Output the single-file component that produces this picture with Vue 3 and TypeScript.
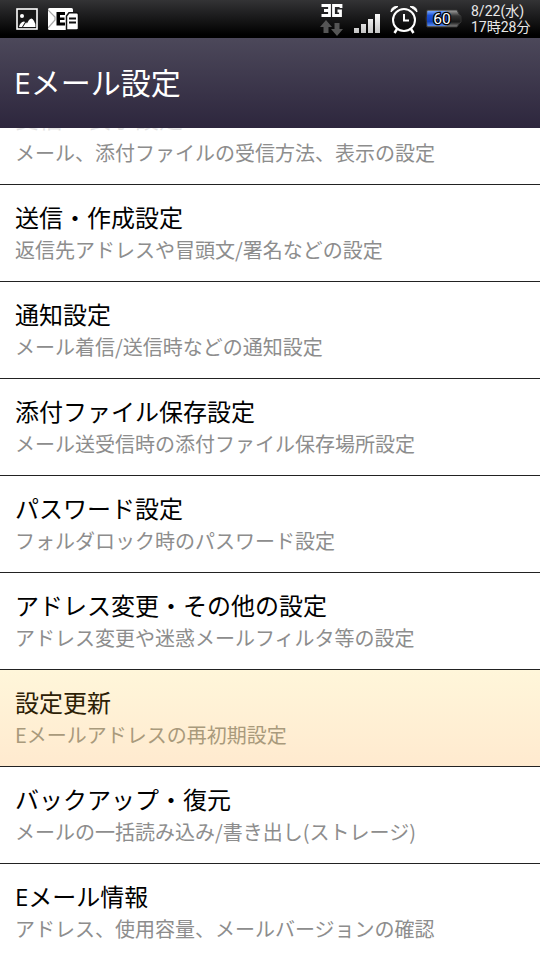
<script setup lang="ts">
interface SettingItem {
  title: string
  summary: string
  pressed?: boolean
}

const items: SettingItem[] = [
  { title: '受信・表示設定', summary: 'メール、添付ファイルの受信方法、表示の設定' },
  { title: '送信・作成設定', summary: '返信先アドレスや冒頭文/署名などの設定' },
  { title: '通知設定', summary: 'メール着信/送信時などの通知設定' },
  { title: '添付ファイル保存設定', summary: 'メール送受信時の添付ファイル保存場所設定' },
  { title: 'パスワード設定', summary: 'フォルダロック時のパスワード設定' },
  { title: 'アドレス変更・その他の設定', summary: 'アドレス変更や迷惑メールフィルタ等の設定' },
  { title: '設定更新', summary: 'Eメールアドレスの再初期設定', pressed: true },
  { title: 'バックアップ・復元', summary: 'メールの一括読み込み/書き出し(ストレージ)' },
  { title: 'Eメール情報', summary: 'アドレス、使用容量、メールバージョンの確認' },
]
</script>

<template>
  <div class="screen">
    <div class="status">
      <div class="notices">
        <svg class="picture" width="22" height="22" viewBox="0 0 22 22">
          <rect x="1" y="1" width="20" height="20" fill="#171717" stroke="#fff" stroke-width="1.600" />
          <circle cx="6" cy="8" r="2" fill="#fff" />
          <path d="M3 19Q4 14 8 13.500L9 14L6 19Z M7 19L10 14.500L11 15L10 17L13 12Q16 8.500 18 13Q19.500 15 19.500 19Z" fill="#fff" />
        </svg>
        <svg class="mail" width="31" height="22" viewBox="0 0 31 22">
          <rect x="0" y="0" width="25" height="22" rx="1.5" fill="#fff" />
          <path d="M0 2L7 9V12L0 20" fill="none" stroke="#aaa" stroke-width="1.2" />
          <path d="M8.500 4H17V7H12V9.500H16.500V12H12V14.500H17V17.500H8.500Z" fill="#000" />
          <path d="M18.500 23V8L21 4.800H28.500Q30.500 4.800 30.500 6.800V20.500Q30.500 22 28.500 22H19" fill="#fff" stroke="#111" stroke-width="1.500" />
          <path d="M21 10.500H28M21 14.500H28" stroke="#111" stroke-width="2" />
        </svg>
      </div>
      <div class="indicators">
        <svg class="network" width="24" height="34" viewBox="0 0 24 34">
          <path d="M1.500 2.500H9.500V12.500H1.500M4 7.500H9.500M21 5V2.500H13.500V12.500H20.500V8H17.500" fill="none" stroke="#fff" stroke-width="2.800" />
          <path d="M6 17L12 24H8.500V30H3.500V24H0Z M14.500 20H19.500V26H23L17 33L11 26H14.500Z" fill="#555" />
        </svg>
        <svg class="signal" width="27" height="20" viewBox="0 0 27 20">
          <defs>
            <linearGradient id="bars" x1="0" y1="0" x2="0" y2="20" gradientUnits="userSpaceOnUse">
              <stop offset="0" stop-color="#fff" /><stop offset="1" stop-color="#c4c4c4" />
            </linearGradient>
          </defs>
          <path d="M0 15H5V20H0Z M7 11H12V20H7Z M14 6H19V20H14Z M21 1H26V20H21Z" fill="url(#bars)" />
        </svg>
        <svg class="alarm" width="28" height="29" viewBox="0 0 28 29" fill="none" stroke="#fff">
          <circle cx="14" cy="15" r="11" stroke-width="2" />
          <path d="M14 9V15.500H19" stroke-width="2" />
          <path d="M7 24L4.500 28M21 24L23.500 28" stroke-width="2.500" />
          <path d="M1 7Q1 1 8 1.500Q4 4 1 7ZM27 7Q27 1 20 1.500Q24 4 27 7Z" fill="#fff" stroke-width="1" />
        </svg>
        <svg class="battery" width="38" height="20" viewBox="0 0 38 20">
          <defs>
            <linearGradient id="charge" x1="0" y1="0" x2="0" y2="1">
              <stop offset="0" stop-color="#77a9ff" /><stop offset=".3" stop-color="#1b50d8" />
              <stop offset=".7" stop-color="#1242bd" /><stop offset="1" stop-color="#578cf2" />
            </linearGradient>
            <linearGradient id="shell" x1="0" y1="0" x2="0" y2="1">
              <stop offset="0" stop-color="#aaa" /><stop offset=".35" stop-color="#333" />
              <stop offset=".7" stop-color="#181818" /><stop offset="1" stop-color="#888" />
            </linearGradient>
          </defs>
          <path d="M2 1H32L34 5L36 7V13L34 15L32 18H2Q0 10 2 1Z" fill="url(#shell)" stroke="#333" />
          <path d="M2.500 2H22V17H2.500Q1 10 2.500 2Z" fill="url(#charge)" />
          <text x="17" y="15" text-anchor="middle" class="level">60</text>
        </svg>
        <div class="clock"><span>8/22(水)</span><span>17時28分</span></div>
      </div>
    </div>
    <header class="titlebar"><h1>Eメール設定</h1></header>
    <main class="viewport">
      <ul class="list">
        <li v-for="item in items" :key="item.title" class="row" :class="{ pressed: item.pressed }">
          <div class="title">{{ item.title }}</div>
          <div class="summary">{{ item.summary }}</div>
        </li>
      </ul>
    </main>
  </div>
</template>

<style>
body { margin: 0; background: #fff; }
</style>

<style scoped>
.screen { width: 540px; height: 960px; overflow: hidden; display: flex; flex-direction: column; background: #fff; font-family: "Open Sans", "Noto Sans CJK JP", sans-serif; }
.status { height: 38px; flex: none; display: flex; justify-content: space-between; background: linear-gradient(#333335, #000 92%); }
.notices { display: flex; gap: 10px; padding: 8px 0 0 16px; }
.indicators { display: flex; align-items: flex-start; padding-right: 8px; }
.network { margin: 3px 10px 0 0; }
.signal { margin: 13px 9px 0 0; }
.alarm { margin: 5px 7px 0 0; }
.battery { margin: 9px 8px 0 0; }
.level { font: 15.5px Roboto, sans-serif; fill: #fff; stroke: #000; stroke-width: 2.5px; paint-order: stroke; }
.clock { width: 61px; display: flex; flex-direction: column; padding-top: 4px; font: 14px/15.5px Roboto, "Noto Sans CJK JP", sans-serif; color: #e8e8e8; white-space: nowrap; }
.titlebar { height: 90px; box-sizing: border-box; flex: none; display: flex; align-items: center; padding-left: 14px; background: linear-gradient(#4c485a, #2d263d); }
h1 { margin: 0; font-size: 30px; line-height: 40px; font-weight: 400; color: #fff; }
.viewport { position: relative; flex: 1; min-height: 0; overflow: hidden; }
.viewport::before { content: ""; position: absolute; z-index: 1; top: 0; left: 0; right: 0; height: 14px; background: linear-gradient(rgba(255,255,255,.9), rgba(255,255,255,.8) 50%, rgba(255,255,255,0)); }
.list { list-style: none; margin: -40px 0 0; padding: 0; }
.row { height: 97px; box-sizing: border-box; padding: 17px 15px 0; border-bottom: 1px solid #222; white-space: nowrap; }
.row:first-child .title { margin: -2px 0 2px; }
.row:last-child { border-bottom: 0; }
.title { font-size: 24px; line-height: 32px; color: #000; }
.summary { font-family: "Noto Sans CJK JP", sans-serif; font-size: 20px; line-height: 31px; color: #8d8d8d; }
.pressed { background: linear-gradient(#fff6da, #ffeacf); }
.pressed .title { color: #2c2005; }
.pressed .summary { color: #a99a7c; }
</style>
